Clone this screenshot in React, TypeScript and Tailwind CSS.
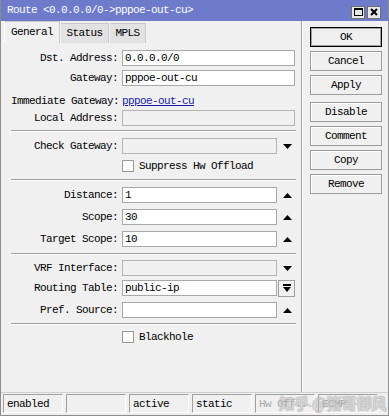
import type { ReactNode } from 'react';

const mono = "font-['Liberation_Mono',monospace] text-[11px] tracking-[-0.6px]";

function Down() {
  return (
    <svg width="9" height="5" viewBox="0 0 9 5">
      <path d="M0 0h9L4.5 5z" fill="#000" />
    </svg>
  );
}

function Up() {
  return (
    <svg width="9" height="5" viewBox="0 0 9 5">
      <path d="M0 5h9L4.5 0z" fill="#000" />
    </svg>
  );
}

function Field({ label, children }: { label: string; children: ReactNode }) {
  return (
    <div className="flex items-center h-[16px]">
      <div className="w-[118px] text-right pr-[1px] whitespace-pre">{label}</div>
      <div className="ml-[3px] flex items-center">{children}</div>
    </div>
  );
}

function Input({ value = '', wide, disabled }: { value?: string; wide?: boolean; disabled?: boolean }) {
  return (
    <div
      className={`h-[16px] border px-[2px] leading-[14px] ${wide ? 'w-[173px]' : 'w-[155px]'} ${
        disabled ? 'bg-[#f0f0f0] border-[#b4b4b4]' : 'bg-white border-[#a8a8a8]'
      }`}
    >
      {value}
    </div>
  );
}

function Sep({ mt }: { mt: string }) {
  return <div className={`${mt} ml-[10px] w-[285px] h-[2px] border-t border-[#a0a0a0] border-b border-b-white`} />;
}

function Check({ label }: { label: string }) {
  return (
    <div className="flex items-center h-[12px] ml-[121px]">
      <div className="w-[12px] h-[12px] bg-white border border-[#9a9a9a]" />
      <span className="ml-[5px]">{label}</span>
    </div>
  );
}

function Btn({ label, mt, primary }: { label: string; mt: string; primary?: boolean }) {
  return (
    <div
      className={`${mt} w-[72px] h-[20px] flex items-center justify-center bg-[#f0f0f0] ${
        primary ? 'border border-black shadow-[inset_0_0_0_1px_#a0a0a0]' : 'border border-[#9c9c9c] shadow-[inset_1px_1px_0_#fff]'
      }`}
    >
      {label}
    </div>
  );
}

function Cell({ text, dim }: { text: string; dim?: boolean }) {
  return (
    <div
      className={`w-[60px] h-[19px] pl-[3px] leading-[18px] border-t border-l border-[#a0a0a0] border-b border-r border-b-white border-r-white ${
        dim ? 'text-[#a8a8a8]' : 'text-black'
      }`}
    >
      {text}
    </div>
  );
}

export default function App() {
  return (
    <div className={`relative w-[389px] h-[416px] bg-[#f0f0f0] flex flex-col border-x border-b border-[#8c8c8c] text-black ${mono}`}>
      <div className="h-[21px] bg-[#6e7bcb] flex items-center pl-[6px] text-white">
        <span className="flex-1">Route &lt;0.0.0.0/0-&gt;pppoe-out-cu&gt;</span>
        <div className="flex gap-[2px] mr-[7px] mt-[3px]">
          <div className="w-[14px] h-[13px] bg-[#e8e8e8] border border-[#707070] flex items-center justify-center">
            <div className="w-[9px] h-[8px] border border-black border-t-2" />
          </div>
          <div className="w-[14px] h-[13px] bg-[#e8e8e8] border border-[#707070] flex items-center justify-center">
            <svg width="8" height="8" viewBox="0 0 8 8">
              <path d="M1 1l6 6M7 1L1 7" stroke="#000" strokeWidth="2" />
            </svg>
          </div>
        </div>
      </div>

      <div className="flex-1 flex">
        <div className="w-[301px] flex flex-col border-r border-[#a0a0a0] shadow-[1px_0_0_#fff]">
          <div className="h-[22px] flex items-end pl-[3px]">
            <div className="w-[56px] h-[22px] flex items-center justify-center border-t border-x border-[#c8c8c8] border-l-white bg-[#f0f0f0]">
              General
            </div>
            <div className="w-[48px] h-[20px] ml-[1px] flex items-center justify-center border-t border-r border-[#c8c8c8] bg-[#e2e2e2]">
              Status
            </div>
            <div className="w-[36px] h-[20px] ml-[1px] flex items-center justify-center border-t border-r border-[#c8c8c8] bg-[#e2e2e2]">
              MPLS
            </div>
          </div>

          <div className="mt-[7px]">
            <Field label="Dst. Address:">
              <Input value="0.0.0.0/0" wide />
            </Field>
          </div>
          <div className="mt-[4px]">
            <Field label="Gateway:">
              <Input value="pppoe-out-cu" wide />
            </Field>
          </div>
          <div className="mt-[7px] flex items-center h-[16px]">
            <div className="w-[119px] pl-[10px] whitespace-pre">Immediate Gateway:</div>
            <span className="ml-[2px] text-[#1a1aa6] underline">pppoe-out-cu</span>
          </div>
          <div className="mt-[1px]">
            <Field label="Local Address:">
              <Input wide disabled />
            </Field>
          </div>
          <Sep mt="mt-[4px]" />
          <div className="mt-[6px]">
            <Field label="Check Gateway:">
              <Input disabled />
              <div className="w-[18px] flex justify-center ml-[1px]"><Down /></div>
            </Field>
          </div>
          <div className="mt-[6px]">
            <Check label="Suppress Hw Offload" />
          </div>
          <Sep mt="mt-[7px]" />
          <div className="mt-[6px]">
            <Field label="Distance:">
              <Input value="1" />
              <div className="w-[18px] flex justify-center ml-[1px]"><Up /></div>
            </Field>
          </div>
          <div className="mt-[6px]">
            <Field label="Scope:">
              <Input value="30" />
              <div className="w-[18px] flex justify-center ml-[1px]"><Up /></div>
            </Field>
          </div>
          <div className="mt-[6px]">
            <Field label="Target Scope:">
              <Input value="10" />
              <div className="w-[18px] flex justify-center ml-[1px]"><Up /></div>
            </Field>
          </div>
          <Sep mt="mt-[6px]" />
          <div className="mt-[5px]">
            <Field label="VRF Interface:">
              <Input disabled />
              <div className="w-[18px] flex justify-center ml-[1px]"><Down /></div>
            </Field>
          </div>
          <div className="mt-[4px]">
            <Field label="Routing Table:">
              <Input value="public-ip" />
              <div className="ml-[1px] w-[17px] h-[17px] border border-[#a0a0a0] flex flex-col items-center justify-center gap-[1px]">
                <div className="w-[8px] h-[2px] bg-black" />
                <svg width="8" height="5" viewBox="0 0 8 5">
                  <path d="M0 0h8L4 5z" fill="#000" />
                </svg>
              </div>
            </Field>
          </div>
          <div className="mt-[6px]">
            <Field label="Pref. Source:">
              <Input />
              <div className="w-[18px] flex justify-center ml-[1px]"><Up /></div>
            </Field>
          </div>
          <Sep mt="mt-[5px]" />
          <div className="mt-[6px]">
            <Check label="Blackhole" />
          </div>
        </div>

        <div className="flex-1 flex flex-col pl-[8px]">
          <Btn label="OK" mt="mt-[6px]" primary />
          <Btn label="Cancel" mt="mt-[4px]" />
          <Btn label="Apply" mt="mt-[4px]" />
          <Btn label="Disable" mt="mt-[7px]" />
          <Btn label="Comment" mt="mt-[4px]" />
          <Btn label="Copy" mt="mt-[4px]" />
          <Btn label="Remove" mt="mt-[4px]" />
        </div>
      </div>

      <div className="h-[23px] flex items-start gap-[3px] pl-[2px] pt-[1px] border-t border-[#d0d0d0]">
        <Cell text="enabled" />
        <Cell text="" />
        <Cell text="active" />
        <Cell text="static" />
        <Cell text="Hw Off..." dim />
        <Cell text="ECMP" dim />
      </div>

      <div className="absolute left-[278px] top-[394px] text-[15px] tracking-normal text-[#f6f6f6]/40 font-['Noto_Sans_CJK_SC',sans-serif] leading-[18px] [text-shadow:1px_0_0_#aaa,-1px_0_0_#aaa,0_1px_0_#aaa,0_-1px_0_#aaa] opacity-60">
        知乎 @猪哥御风
      </div>
    </div>
  );
}
